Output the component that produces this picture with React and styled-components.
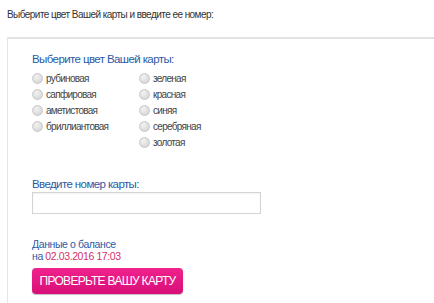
import React from "react";
import styled, { createGlobalStyle } from "styled-components";

const GlobalStyle = createGlobalStyle`
  html, body {
    margin: 0;
    padding: 0;
    background: #fff;
  }
  body {
    font-family: Tahoma, "Liberation Sans", sans-serif;
  }
`;

const Page = styled.div`
  padding: 8px 0 0 7px;
  width: 434px;
  box-sizing: border-box;
`;

const Intro = styled.div`
  font-size: 10px;
  line-height: 14px;
  color: #333;
  letter-spacing: -0.55px;
  margin-bottom: 15px;
`;

const Box = styled.div`
  border-top: 2px solid #e3e3e3;
  border-left: 1px solid #e6e6e6;
  padding: 13px 0 10px 24px;
  min-height: 250px;
`;

const Label = styled.div`
  font-size: 11.5px;
  line-height: 15px;
  letter-spacing: -0.6px;
  color: #2b5aa5;
  margin-bottom: ${(p) => p.gap || 0}px;
`;

const Columns = styled.div`
  display: flex;
`;

const Column = styled.div`
  width: ${(p) => p.width}px;
  display: flex;
  flex-direction: column;
`;

const Option = styled.label`
  display: flex;
  align-items: center;
  height: 16px;
  font-size: 10px;
  letter-spacing: -0.7px;
  color: #444;
`;

const Dot = styled.span`
  width: 9px;
  height: 9px;
  border-radius: 50%;
  background: radial-gradient(circle at 40% 35%, #f2f2f2, #cfcfcf);
  border: 1px solid #c9c9c9;
  margin-right: 3px;
  flex-shrink: 0;
`;

const Field = styled.div`
  margin-top: 27px;
`;

const Input = styled.input`
  display: block;
  width: 229px;
  height: 22px;
  box-sizing: border-box;
  border: 1px solid #d4d4d4;
  box-shadow: inset 0 1px 2px rgba(0, 0, 0, 0.06);
  margin: 0;
  outline: none;
`;

const Balance = styled.div`
  margin-top: 24px;
  font-size: 10.5px;
  line-height: 12px;
  letter-spacing: -0.4px;
  color: #2b5aa5;
`;

const Date = styled.span`
  color: #d2316a;
`;

const Button = styled.button`
  display: block;
  margin-top: 6px;
  width: 151px;
  height: 26px;
  border: none;
  border-radius: 4px;
  background: linear-gradient(#f0228d, #d80f78);
  box-shadow: 0 1px 1px rgba(0, 0, 0, 0.25);
  color: #fff;
  font-family: Tahoma, "Liberation Sans", sans-serif;
  font-size: 12px;
  letter-spacing: -0.7px;
  padding: 0;
  cursor: pointer;
`;

const left = ["рубиновая", "сапфировая", "аметистовая", "бриллиантовая"];
const right = ["зеленая", "красная", "синяя", "серебряная", "золотая"];

const App = () => {
  return (
    <Page>
      <GlobalStyle />
      <Intro>Выберите цвет Вашей карты и введите ее номер:</Intro>
      <Box>
        <Label gap={3}>Выберите цвет Вашей карты:</Label>
        <Columns>
          <Column width={107}>
            {left.map((c) => (
              <Option key={c}>
                <Dot />
                {c}
              </Option>
            ))}
          </Column>
          <Column width={120}>
            {right.map((c) => (
              <Option key={c}>
                <Dot />
                {c}
              </Option>
            ))}
          </Column>
        </Columns>
        <Field>
          <Label>Введите номер карты:</Label>
          <Input />
        </Field>
        <Balance>
          Данные о балансе
          <br />
          на <Date>02.03.2016 17:03</Date>
        </Balance>
        <Button>ПРОВЕРЬТЕ ВАШУ КАРТУ</Button>
      </Box>
    </Page>
  );
};

export default App;
